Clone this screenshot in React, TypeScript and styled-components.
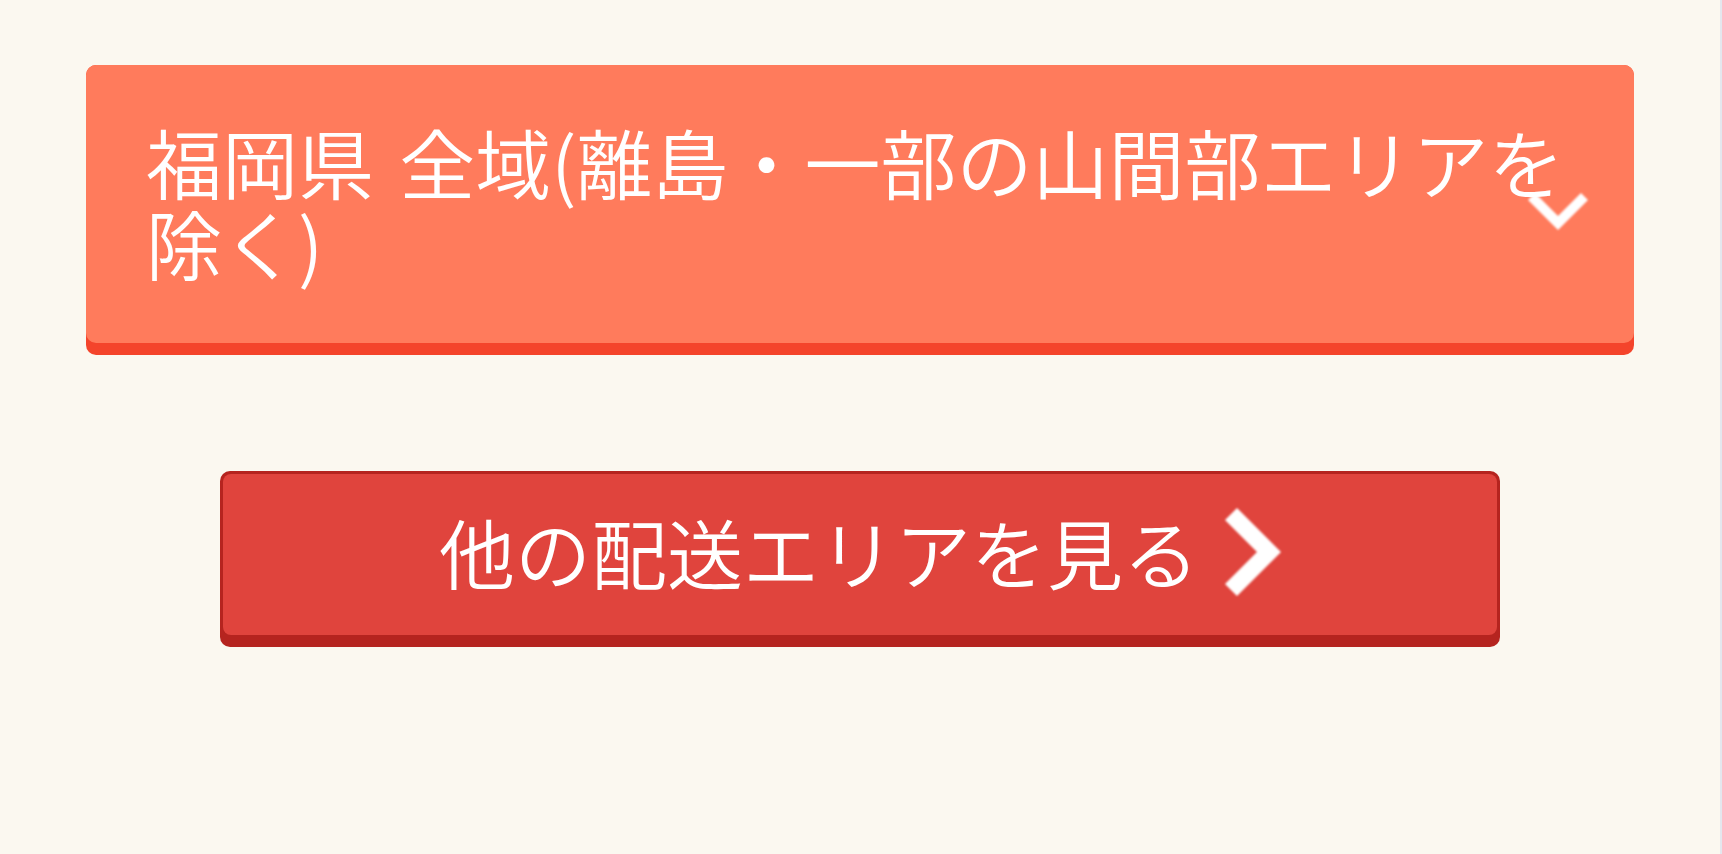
import React from "react";
import styled, { createGlobalStyle } from "styled-components";

const GlobalStyle = createGlobalStyle`
  html, body {
    margin: 0;
    padding: 0;
    background: #e4e7ee;
  }
  body {
    font-family: "Noto Sans CJK JP", "Noto Sans", sans-serif;
  }
`;

const Page = styled.main`
  width: calc(100% - 2px);
  min-height: 100vh;
  box-sizing: border-box;
  background: #fbf8f0;
  padding: 65px 86px 0;
  display: flex;
  flex-direction: column;
  align-items: center;
  gap: 116px;
`;

const AreaToggle = styled.div`
  position: relative;
  width: 100%;
  box-sizing: border-box;
  background: #f4442b;
  border-radius: 10px;
  padding-bottom: 12px;
  cursor: pointer;
`;

const AreaFace = styled.div`
  height: 278px;
  box-sizing: border-box;
  background: #ff7b5c;
  border-radius: 10px;
  padding: 56px 36px 0 60px;
`;

const AreaTitle = styled.h2`
  margin: 0;
  color: #ffffff;
  font-family: "Noto Sans CJK JP", sans-serif;
  font-weight: 350;
  font-size: 76px;
  line-height: 81px;
`;

const ToggleIcon = styled.svg`
  position: absolute;
  left: 1442px;
  top: 128px;
  width: 60px;
  height: 37px;
  filter: blur(0.9px);
`;

const MoreButton = styled.a`
  display: block;
  width: 1280px;
  box-sizing: border-box;
  background: #b5241f;
  border-radius: 10px;
  padding: 3px 3px 12px;
  text-decoration: none;
  cursor: pointer;
`;

const MoreFace = styled.div`
  height: 161px;
  box-sizing: border-box;
  background: #e0443d;
  border-radius: 8px;
  display: flex;
  align-items: center;
  justify-content: center;
  gap: 26px;
  padding-bottom: 6px;
`;

const MoreLabel = styled.span`
  color: #ffffff;
  font-family: "Noto Sans CJK JP", sans-serif;
  font-size: 76px;
  line-height: 81px;
  font-weight: 350;
`;

const ArrowIcon = styled.svg`
  width: 56px;
  height: 88px;
  flex: none;
  filter: blur(0.9px);
`;

export default function App() {
  return (
    <>
      <GlobalStyle />
      <Page lang="ja">
        <AreaToggle>
          <AreaFace>
            <AreaTitle>福岡県{"\u2004"}全域(離島・一部の山間部エリアを除く)</AreaTitle>
          </AreaFace>
          <ToggleIcon viewBox="0 0 60 37" aria-hidden="true">
            <polygon points="0,7 7,0 30,23 53,0 60,7 30,37" fill="#ffffff" />
          </ToggleIcon>
        </AreaToggle>
        <MoreButton href="#">
          <MoreFace>
            <MoreLabel>他の配送エリアを見る</MoreLabel>
            <ArrowIcon viewBox="0 0 56 88" aria-hidden="true">
              <polygon points="12,0 56,44 12,88 0,76 32,44 0,12" fill="#ffffff" />
            </ArrowIcon>
          </MoreFace>
        </MoreButton>
      </Page>
    </>
  );
}
